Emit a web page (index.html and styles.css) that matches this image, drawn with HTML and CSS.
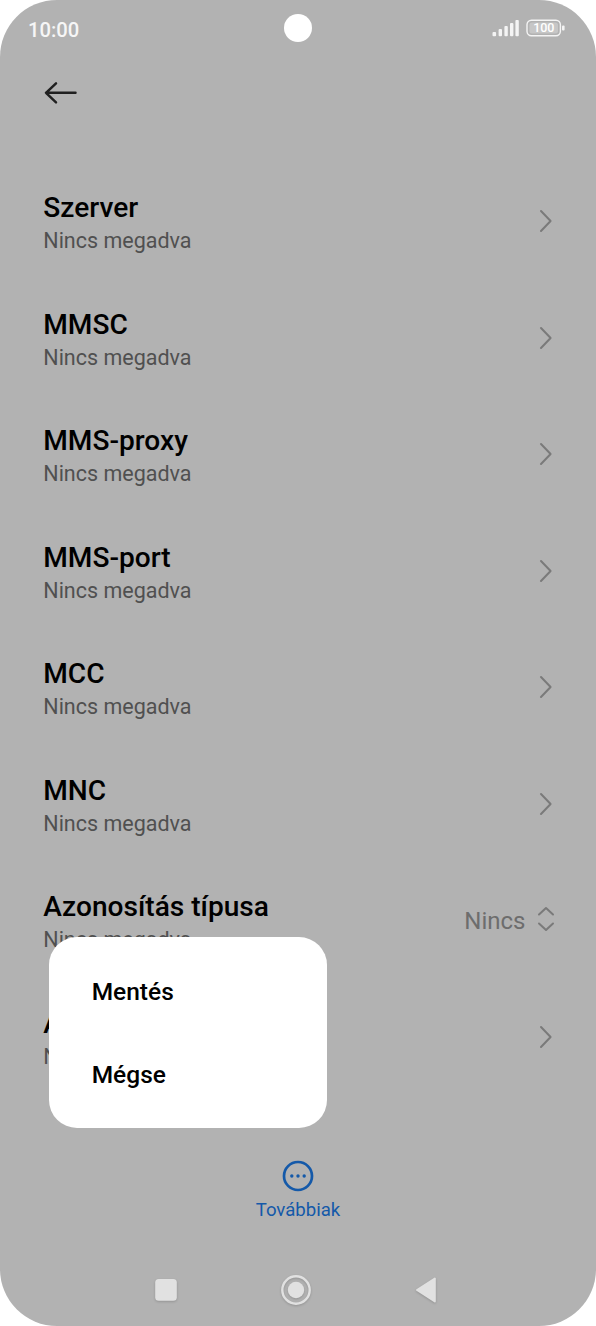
FILE: index.html
```html
<!DOCTYPE html>
<html lang="hu">
<head>
<meta charset="utf-8">
<title>APN</title>
<link rel="stylesheet" href="styles.css">
</head>
<body>
<div class="phone">
  <header class="status">
    <span class="clock">10:00</span>
    <span class="camera"></span>
    <svg class="indicators" width="76" height="22" viewBox="0 0 76 22">
      <g fill="#f4f4f4">
        <rect x="2.5" y="14" width="3.6" height="4.2" rx="1"/>
        <rect x="8.6" y="11" width="3.4" height="7.2" rx="1"/>
        <rect x="14.4" y="8" width="3.4" height="10.2" rx="1"/>
        <rect x="20" y="5" width="3.4" height="13.2" rx="1"/>
        <rect x="25.4" y="2" width="3.4" height="16.2" rx="1"/>
        <rect x="72" y="7.5" width="2.6" height="5" rx="1"/>
      </g>
      <rect x="37" y="2.2" width="33.4" height="15.6" rx="4.5" fill="none" stroke="#f4f4f4" stroke-width="1.4"/>
      <rect x="39.4" y="4.4" width="28.6" height="11.2" rx="2.5" fill="#c6c6c6"/>
      <text class="level" x="53.8" y="14.4" text-anchor="middle">100</text>
    </svg>
  </header>
  <nav class="toolbar">
    <svg width="36" height="26" viewBox="0 0 36 26" fill="none" stroke="#202020" stroke-width="2.5" stroke-linecap="round" stroke-linejoin="round"><path d="M32.5 12.8H3M13 3.3L3 12.8L13 22.3"/></svg>
  </nav>
  <main class="list">
    <div class="row"><div class="text"><div class="title">Szerver</div><div class="sub">Nincs megadva</div></div><svg class="chevron" viewBox="0 0 14 24"><path d="M2 2L11.6 12L2 22"/></svg></div>
    <div class="row"><div class="text"><div class="title">MMSC</div><div class="sub">Nincs megadva</div></div><svg class="chevron" viewBox="0 0 14 24"><path d="M2 2L11.6 12L2 22"/></svg></div>
    <div class="row"><div class="text"><div class="title">MMS-proxy</div><div class="sub">Nincs megadva</div></div><svg class="chevron" viewBox="0 0 14 24"><path d="M2 2L11.6 12L2 22"/></svg></div>
    <div class="row"><div class="text"><div class="title">MMS-port</div><div class="sub">Nincs megadva</div></div><svg class="chevron" viewBox="0 0 14 24"><path d="M2 2L11.6 12L2 22"/></svg></div>
    <div class="row"><div class="text"><div class="title">MCC</div><div class="sub">Nincs megadva</div></div><svg class="chevron" viewBox="0 0 14 24"><path d="M2 2L11.6 12L2 22"/></svg></div>
    <div class="row"><div class="text"><div class="title">MNC</div><div class="sub">Nincs megadva</div></div><svg class="chevron" viewBox="0 0 14 24"><path d="M2 2L11.6 12L2 22"/></svg></div>
    <div class="row"><div class="text"><div class="title">Azonosítás típusa</div><div class="sub">Nincs megadva</div></div><span class="value">Nincs</span><svg class="updown" viewBox="0 0 18 26"><path d="M2 8.5L9 2L16 8.5M2 17.5L9 24L16 17.5"/></svg></div>
    <div class="row"><div class="text"><div class="title">APN típusa</div><div class="sub">Nincs megadva</div></div><svg class="chevron" viewBox="0 0 14 24"><path d="M2 2L11.6 12L2 22"/></svg></div>
  </main>
  <div class="more">
    <svg width="32" height="32" viewBox="0 0 32 32"><circle cx="16" cy="16" r="14" fill="none" stroke="#1459a9" stroke-width="2.7"/><g fill="#1459a9"><circle cx="9.8" cy="16" r="1.7"/><circle cx="16" cy="16" r="1.7"/><circle cx="22.2" cy="16" r="1.7"/></g></svg>
    <span>Továbbiak</span>
  </div>
  <footer class="keys">
    <svg width="24" height="34" viewBox="0 0 24 34"><rect x="1.2" y="6" width="21.6" height="21.8" rx="3.5"/></svg>
    <svg width="34" height="34" viewBox="0 0 34 34"><circle cx="17" cy="17" r="13.7" fill="none" stroke="#e1e1e1" stroke-width="2.4"/><circle cx="17" cy="17" r="8.2"/></svg>
    <svg width="24" height="34" viewBox="0 0 24 34"><path d="M3 17L20.8 5.6V28.4Z" stroke="#e1e1e1" stroke-width="2" stroke-linejoin="round"/></svg>
  </footer>
  <div class="menu">
    <div class="item">Mentés</div>
    <div class="item">Mégse</div>
  </div>
</div>
</body>
</html>
```
FILE: styles.css
```css
* { box-sizing: border-box; }
body { margin: 0; background: #fff; font-family: Roboto, "Liberation Sans", sans-serif; }
svg { display: block; flex: none; }
.phone {
  position: relative;
  width: 596px;
  height: 1326px;
  background: #b2b2b2;
  border-radius: 57px;
  overflow: hidden;
  display: flex;
  flex-direction: column;
}
.status {
  height: 58px;
  padding: 0 30px 0 28px;
  display: grid;
  grid-template-columns: 1fr 28px 1fr;
  align-items: center;
}
.clock { color: #f6f6f6; font-size: 20.2px; font-weight: 500; line-height: 24px; padding-top: 2px; }
.camera { width: 28px; height: 28px; border-radius: 50%; background: #fff; margin: -1.5px 0 0 .8px; }
.indicators { justify-self: end; }
.level { font-size: 12.5px; font-weight: 500; fill: #fff; }
.toolbar { height: 104.7px; padding: 22px 0 0 43.2px; }
.list { flex: none; }
.row { height: 116.55px; padding: 0 43px 0 43.3px; display: flex; align-items: center; }
.text { flex: 1; align-self: flex-start; padding-top: 27.5px; }
.title { font-size: 28.1px; line-height: 35px; font-weight: 500; color: #000; }
.sub { font-size: 21.5px; line-height: 32px; color: #505050; }
.chevron { width: 14px; height: 24px; }
.chevron path, .updown path { fill: none; stroke: #7a7a7a; stroke-width: 2; stroke-linecap: round; stroke-linejoin: round; }
.updown { width: 18px; height: 26px; margin: -2px -1.5px 0 11px; }
.value { font-size: 24px; color: #6d6d6d; padding-top: 2px; }
.more { margin-top: 65px; height: 66px; display: flex; flex-direction: column; align-items: center; color: #1459a9; font-size: 18.6px; line-height: 24px; }
.more svg { margin-right: 1px; }
.more span { margin-top: 6px; }
.keys { margin-top: 47.3px; display: flex; gap: 101px; padding-left: 153.7px; fill: #e1e1e1; }
.keys svg { filter: drop-shadow(0 1px 1px rgba(0, 0, 0, .18)); }
.menu {
  position: absolute;
  left: 48.7px;
  top: 936.7px;
  width: 278.5px;
  height: 191px;
  padding: 13px 43px;
  border-radius: 28px;
  background: #fff;
}
.item { height: 83.3px; line-height: 83.3px; font-size: 24.5px; font-weight: 500; color: #000; }
```
